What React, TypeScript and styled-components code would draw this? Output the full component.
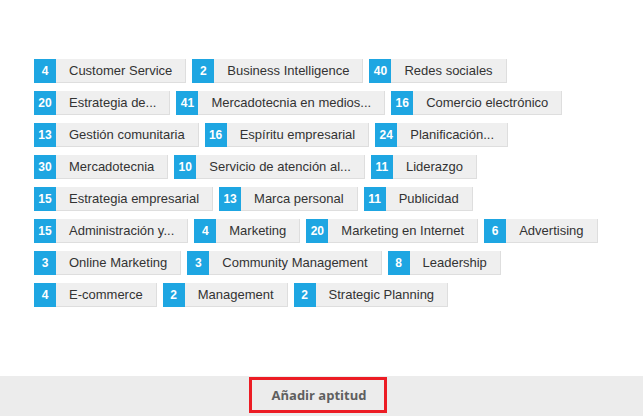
import styled, { createGlobalStyle } from "styled-components";

const GlobalStyle = createGlobalStyle`
  html, body {
    margin: 0;
    padding: 0;
    background: #fff;
  }
`;

const Page = styled.div`
  display: flex;
  flex-direction: column;
  height: 416px;
  overflow: hidden;
`;

const SkillList = styled.ul`
  list-style: none;
  margin: 0;
  padding: 59px 34px 0 34px;
  display: flex;
  flex-wrap: wrap;
  gap: 8px 6px;
  align-content: flex-start;
`;

const Skill = styled.li`
  display: flex;
  height: 24px;
  font-family: "Liberation Sans", Arial, sans-serif;
`;

const Count = styled.span`
  display: flex;
  align-items: center;
  justify-content: center;
  width: 22px;
  background: #1ea6e2;
  color: #fff;
  font-size: 12px;
  font-weight: bold;
`;

const Name = styled.span`
  display: flex;
  align-items: center;
  padding: 0 13px;
  background: #efefef;
  border-right: 1px solid #dedede;
  border-bottom: 1px solid #dedede;
  box-sizing: border-box;
  color: #333;
  font-size: 13px;
  white-space: nowrap;
`;

const Footer = styled.div`
  margin-top: auto;
  height: 39px;
  background: #ececec;
  display: flex;
  justify-content: center;
  align-items: flex-start;
  padding-top: 1px;
  padding-right: 7px;
`;

const AddButton = styled.button`
  height: 36px;
  padding: 0 18px 0 20px;
  border: 3px solid #ec1c24;
  background: transparent;
  color: #5f5f5f;
  font-family: "Open Sans", "Liberation Sans", sans-serif;
  font-size: 13px;
  font-weight: bold;
  cursor: pointer;
`;

const skills: [number, string][] = [
  [4, "Customer Service"],
  [2, "Business Intelligence"],
  [40, "Redes sociales"],
  [20, "Estrategia de..."],
  [41, "Mercadotecnia en medios..."],
  [16, "Comercio electrónico"],
  [13, "Gestión comunitaria"],
  [16, "Espíritu empresarial"],
  [24, "Planificación..."],
  [30, "Mercadotecnia"],
  [10, "Servicio de atención al..."],
  [11, "Liderazgo"],
  [15, "Estrategia empresarial"],
  [13, "Marca personal"],
  [11, "Publicidad"],
  [15, "Administración y..."],
  [4, "Marketing"],
  [20, "Marketing en Internet"],
  [6, "Advertising"],
  [3, "Online Marketing"],
  [3, "Community Management"],
  [8, "Leadership"],
  [4, "E-commerce"],
  [2, "Management"],
  [2, "Strategic Planning"],
];

export default function App() {
  return (
    <Page>
      <GlobalStyle />
      <SkillList>
        {skills.map(([count, name]) => (
          <Skill key={name}>
            <Count>{count}</Count>
            <Name>{name}</Name>
          </Skill>
        ))}
      </SkillList>
      <Footer>
        <AddButton>Añadir aptitud</AddButton>
      </Footer>
    </Page>
  );
}
